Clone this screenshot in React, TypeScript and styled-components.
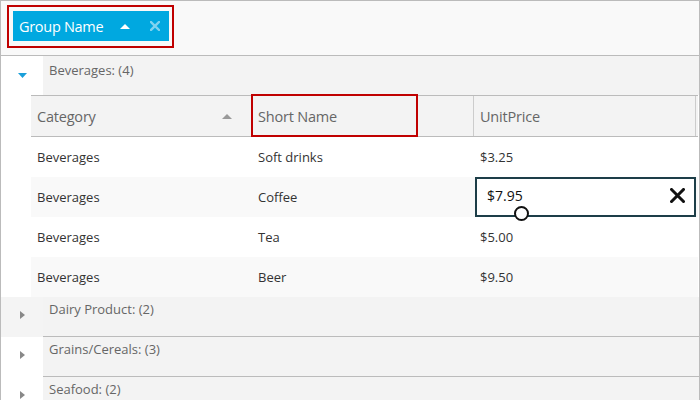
import React from 'react';
import styled, { createGlobalStyle } from 'styled-components';

const GlobalStyles = createGlobalStyle`
    html, body {
        margin: 0;
        padding: 0;
        background: #ffffff;
    }
    body {
        font-family: "Open Sans", "Noto Sans", sans-serif;
    }
    * {
        box-sizing: border-box;
    }
`;

const Grid = styled.div`
    width: 700px;
    height: 400px;
    border: 1px solid #bbbbbb;
    border-bottom: none;
    background: #ffffff;
    overflow: hidden;
    display: flex;
    flex-direction: column;
`;

const GroupPanel = styled.div`
    height: 55px;
    flex: none;
    background: #f9f9f9;
    border-bottom: 1px solid #bbbbbb;
    padding: 4px 0 0 6px;
`;

const DragFrame = styled.div`
    display: inline-block;
    border: 2px solid #c00000;
    padding: 4px 3px 5px 4px;
`;

const GroupChip = styled.div`
    width: 156px;
    height: 30px;
    background: #00a8e0;
    color: #ffffff;
    display: flex;
    align-items: center;
    padding-left: 6px;
    font-size: 14.5px;
    letter-spacing: -0.3px;
`;

const ChipLabel = styled.span`
    flex: 1;
`;

const ChipIcon = styled.span<{ $gap: number }>`
    display: flex;
    align-items: center;
    margin-right: ${(p) => p.$gap}px;
`;

const GroupRow = styled.div<{ $indentBg: string; $height: number }>`
    display: flex;
    height: ${(p) => p.$height}px;
    flex: none;
    & > :first-child {
        background: ${(p) => p.$indentBg};
    }
`;

const Indent = styled.div<{ $top: number }>`
    width: 42px;
    flex: none;
    display: flex;
    justify-content: center;
    padding-top: ${(p) => p.$top}px;
    padding-left: 1px;
`;

const GroupTitle = styled.div<{ $line: boolean; $top: number }>`
    flex: 1;
    background: #f3f3f3;
    color: #666666;
    font-size: 13px;
    padding: ${(p) => p.$top}px 0 0 6px;
    border-bottom: ${(p) => (p.$line ? '1px solid #bbbbbb' : 'none')};
`;

const GroupBody = styled.div`
    display: flex;
    flex: none;
`;

const BodyIndent = styled.div`
    width: 30px;
    flex: none;
    background: #ffffff;
`;

const Table = styled.div`
    width: 667px;
    flex: none;
`;

const HeaderRow = styled.div`
    display: grid;
    grid-template-columns: 221px 222px 222px;
    height: 42px;
    background: #f3f3f3;
    border-top: 1px solid #bbbbbb;
    border-bottom: 1px solid #bbbbbb;
`;

const HeaderCell = styled.div`
    position: relative;
    display: flex;
    align-items: center;
    padding: 0 6px;
    color: #666666;
    font-size: 14.5px;
    letter-spacing: -0.2px;
    border-right: 1px solid #cccccc;
`;

const HeaderText = styled.span`
    flex: 1;
`;

const SortIcon = styled.span`
    display: flex;
    margin-right: 13px;
`;

const DropHighlight = styled.div`
    position: absolute;
    left: -1px;
    top: -2px;
    width: 167px;
    height: 43px;
    border: 2px solid #c00000;
    pointer-events: none;
`;

const DataRow = styled.div<{ $alt: boolean }>`
    display: grid;
    grid-template-columns: 221px 222px 222px;
    height: 40px;
    background: ${(p) => (p.$alt ? '#f9f9f9' : '#ffffff')};
`;

const Cell = styled.div`
    display: flex;
    align-items: center;
    padding: 0 6px;
    color: #333333;
    font-size: 13px;
`;

const EditCell = styled.div`
    position: relative;
    display: flex;
    align-items: center;
    margin-left: 1px;
    padding: 0 10px 4px 10px;
    border: 2px solid #1d3e48;
    background: #ffffff;
    color: #111111;
    font-size: 14px;
`;

const EditValue = styled.span`
    flex: 1;
`;

const ClearButton = styled.span`
    display: flex;
    align-items: center;
    margin-right: -1px;
`;

const Cursor = styled.div`
    position: absolute;
    left: 37px;
    top: 27px;
    width: 15px;
    height: 15px;
    border: 2px solid #111111;
    border-radius: 50%;
    background: #ffffff;
`;

const Triangle = ({
    dir,
    color,
    w,
    h,
}: {
    dir: 'up' | 'down' | 'right';
    color: string;
    w: number;
    h: number;
}) => {
    const points =
        dir === 'up'
            ? `0,${h} ${w / 2},0 ${w},${h}`
            : dir === 'down'
            ? `0,0 ${w},0 ${w / 2},${h}`
            : `0,0 ${w},${h / 2} 0,${h}`;
    return (
        <svg width={w} height={h} viewBox={`0 0 ${w} ${h}`}>
            <polygon points={points} fill={color} />
        </svg>
    );
};

const Cross = ({ size, color, stroke }: { size: number; color: string; stroke: number }) => (
    <svg width={size} height={size} viewBox="0 0 10 10">
        <path d="M1 1 L9 9 M9 1 L1 9" stroke={color} strokeWidth={stroke} strokeLinecap="square" />
    </svg>
);

const products = [
    { category: 'Beverages', name: 'Soft drinks', price: '$3.25' },
    { category: 'Beverages', name: 'Coffee', price: '$7.95' },
    { category: 'Beverages', name: 'Tea', price: '$5.00' },
    { category: 'Beverages', name: 'Beer', price: '$9.50' },
];

const collapsedGroups = [
    { title: 'Dairy Product: (2)', indentBg: '#f4f4f4' },
    { title: 'Grains/Cereals: (3)', indentBg: '#ffffff' },
    { title: 'Seafood: (2)', indentBg: '#ffffff' },
];

const App: React.FC = () => {
    return (
        <>
            <GlobalStyles />
            <Grid>
                <GroupPanel>
                    <DragFrame>
                        <GroupChip>
                            <ChipLabel>Group Name</ChipLabel>
                            <ChipIcon $gap={20}>
                                <Triangle dir="up" color="#ffffff" w={10} h={5} />
                            </ChipIcon>
                            <ChipIcon $gap={9}>
                                <Cross size={10} color="#80d3ef" stroke={2.4} />
                            </ChipIcon>
                        </GroupChip>
                    </DragFrame>
                </GroupPanel>

                <GroupRow $indentBg="#ffffff" $height={39}>
                    <Indent $top={17}>
                        <Triangle dir="down" color="#1a9fd9" w={9} h={5} />
                    </Indent>
                    <GroupTitle $line={false} $top={5}>
                        Beverages: (4)
                    </GroupTitle>
                </GroupRow>

                <GroupBody>
                    <BodyIndent />
                    <Table>
                        <HeaderRow>
                            <HeaderCell>
                                <HeaderText>Category</HeaderText>
                                <SortIcon>
                                    <Triangle dir="up" color="#999999" w={10} h={5} />
                                </SortIcon>
                            </HeaderCell>
                            <HeaderCell>
                                <HeaderText>Short Name</HeaderText>
                                <DropHighlight />
                            </HeaderCell>
                            <HeaderCell>
                                <HeaderText>UnitPrice</HeaderText>
                            </HeaderCell>
                        </HeaderRow>
                        {products.map((p, i) => (
                            <DataRow key={p.name} $alt={i % 2 === 1}>
                                <Cell>{p.category}</Cell>
                                <Cell>{p.name}</Cell>
                                {i === 1 ? (
                                    <EditCell>
                                        <EditValue>{p.price}</EditValue>
                                        <ClearButton>
                                            <Cross size={15} color="#111111" stroke={2} />
                                        </ClearButton>
                                        <Cursor />
                                    </EditCell>
                                ) : (
                                    <Cell>{p.price}</Cell>
                                )}
                            </DataRow>
                        ))}
                    </Table>
                </GroupBody>

                {collapsedGroups.map((g, i) => (
                    <GroupRow key={g.title} $indentBg={g.indentBg} $height={40}>
                        <Indent $top={14}>
                            <Triangle dir="right" color="#888888" w={5} h={8} />
                        </Indent>
                        <GroupTitle $line={i < collapsedGroups.length - 1} $top={3}>
                            {g.title}
                        </GroupTitle>
                    </GroupRow>
                ))}
            </Grid>
        </>
    );
};

export default App;
